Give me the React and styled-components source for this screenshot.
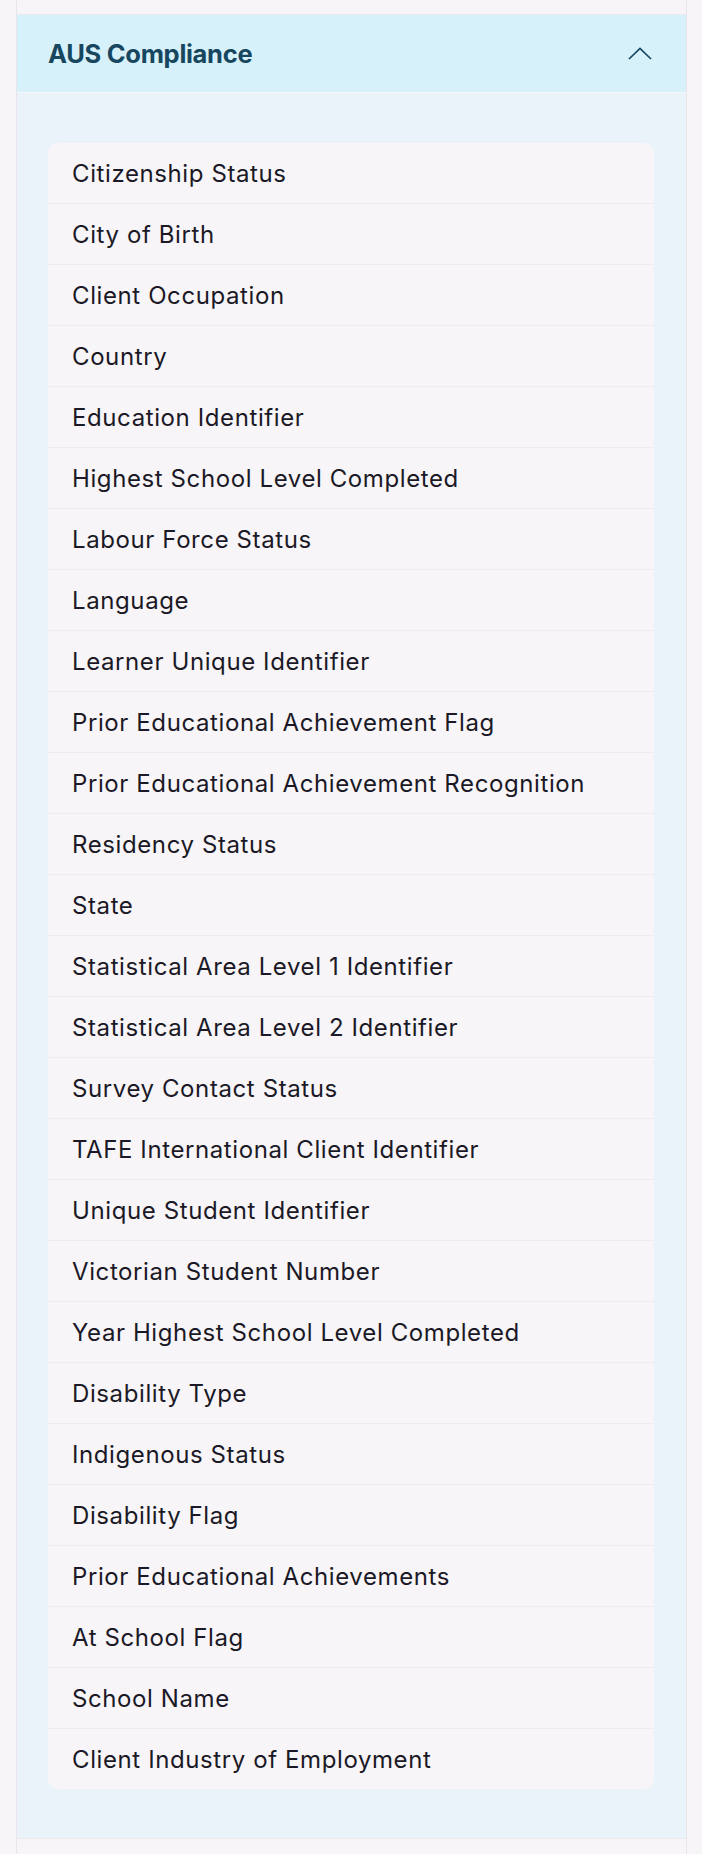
import React from "react";
import styled, {createGlobalStyle} from "styled-components";

const GlobalStyle = createGlobalStyle`
    body {
        margin: 0;
        background: #f7f5f8;
        font-family: Inter, "Open Sans", sans-serif;
    }
`

const Wrapper = styled.div`
    margin: 0 15px 0 16px;
    border-left: 1px solid #e8e6eb;
    border-right: 1px solid #e8e6eb;
    background: #f7f5f8;
`

const PrevItem = styled.div`
    height: 14px;
    border-bottom: 1px solid #ebe9ee;
`

const Header = styled.div`
    height: 77px;
    display: flex;
    align-items: center;
    justify-content: space-between;
    padding: 0 34px 0 31px;
    background: #d7f1fb;
    border-bottom: 1px solid #f3f8fc;
`

const Title = styled.h2`
    margin: 0;
    font-size: 25.5px;
    font-weight: 700;
    letter-spacing: -0.3px;
    color: #17465f;
`

const Content = styled.div`
    background: #ebf3fa;
    padding: 50px 32px 49px 31px;
`

const Card = styled.ul`
    list-style: none;
    margin: 0;
    padding: 0;
    background: #f7f5f8;
    border-radius: 10px;
    overflow: hidden;
`

const Row = styled.li`
    height: 60px;
    display: flex;
    align-items: center;
    padding-left: 24px;
    font-size: 24px;
    letter-spacing: 0.6px;
    color: #1b1926;
    border-top: ${props => props.first ? "none" : "1px solid #ecebef"};
`

const NextItem = styled.div`
    height: 15px;
    border-top: 1px solid #ebe9ee;
`

const fields = [
    "Citizenship Status",
    "City of Birth",
    "Client Occupation",
    "Country",
    "Education Identifier",
    "Highest School Level Completed",
    "Labour Force Status",
    "Language",
    "Learner Unique Identifier",
    "Prior Educational Achievement Flag",
    "Prior Educational Achievement Recognition",
    "Residency Status",
    "State",
    "Statistical Area Level 1 Identifier",
    "Statistical Area Level 2 Identifier",
    "Survey Contact Status",
    "TAFE International Client Identifier",
    "Unique Student Identifier",
    "Victorian Student Number",
    "Year Highest School Level Completed",
    "Disability Type",
    "Indigenous Status",
    "Disability Flag",
    "Prior Educational Achievements",
    "At School Flag",
    "School Name",
    "Client Industry of Employment"
];

const Chevron = () => (
    <svg width="24" height="13" viewBox="0 0 24 13" fill="none">
        <polyline points="1,12 12,1.5 23,12" stroke="#17465f" strokeWidth="1.7" />
    </svg>
);

const App = () => {
    return (
        <>
            <GlobalStyle/>
            <Wrapper>
                <PrevItem/>
                <Header>
                    <Title>AUS Compliance</Title>
                    <Chevron/>
                </Header>
                <Content>
                    <Card>
                        {fields.map((f, i) =>
                            <Row key={f} first={i === 0}>{f}</Row>
                        )}
                    </Card>
                </Content>
                <NextItem/>
            </Wrapper>
        </>
    );
}

export default App;
